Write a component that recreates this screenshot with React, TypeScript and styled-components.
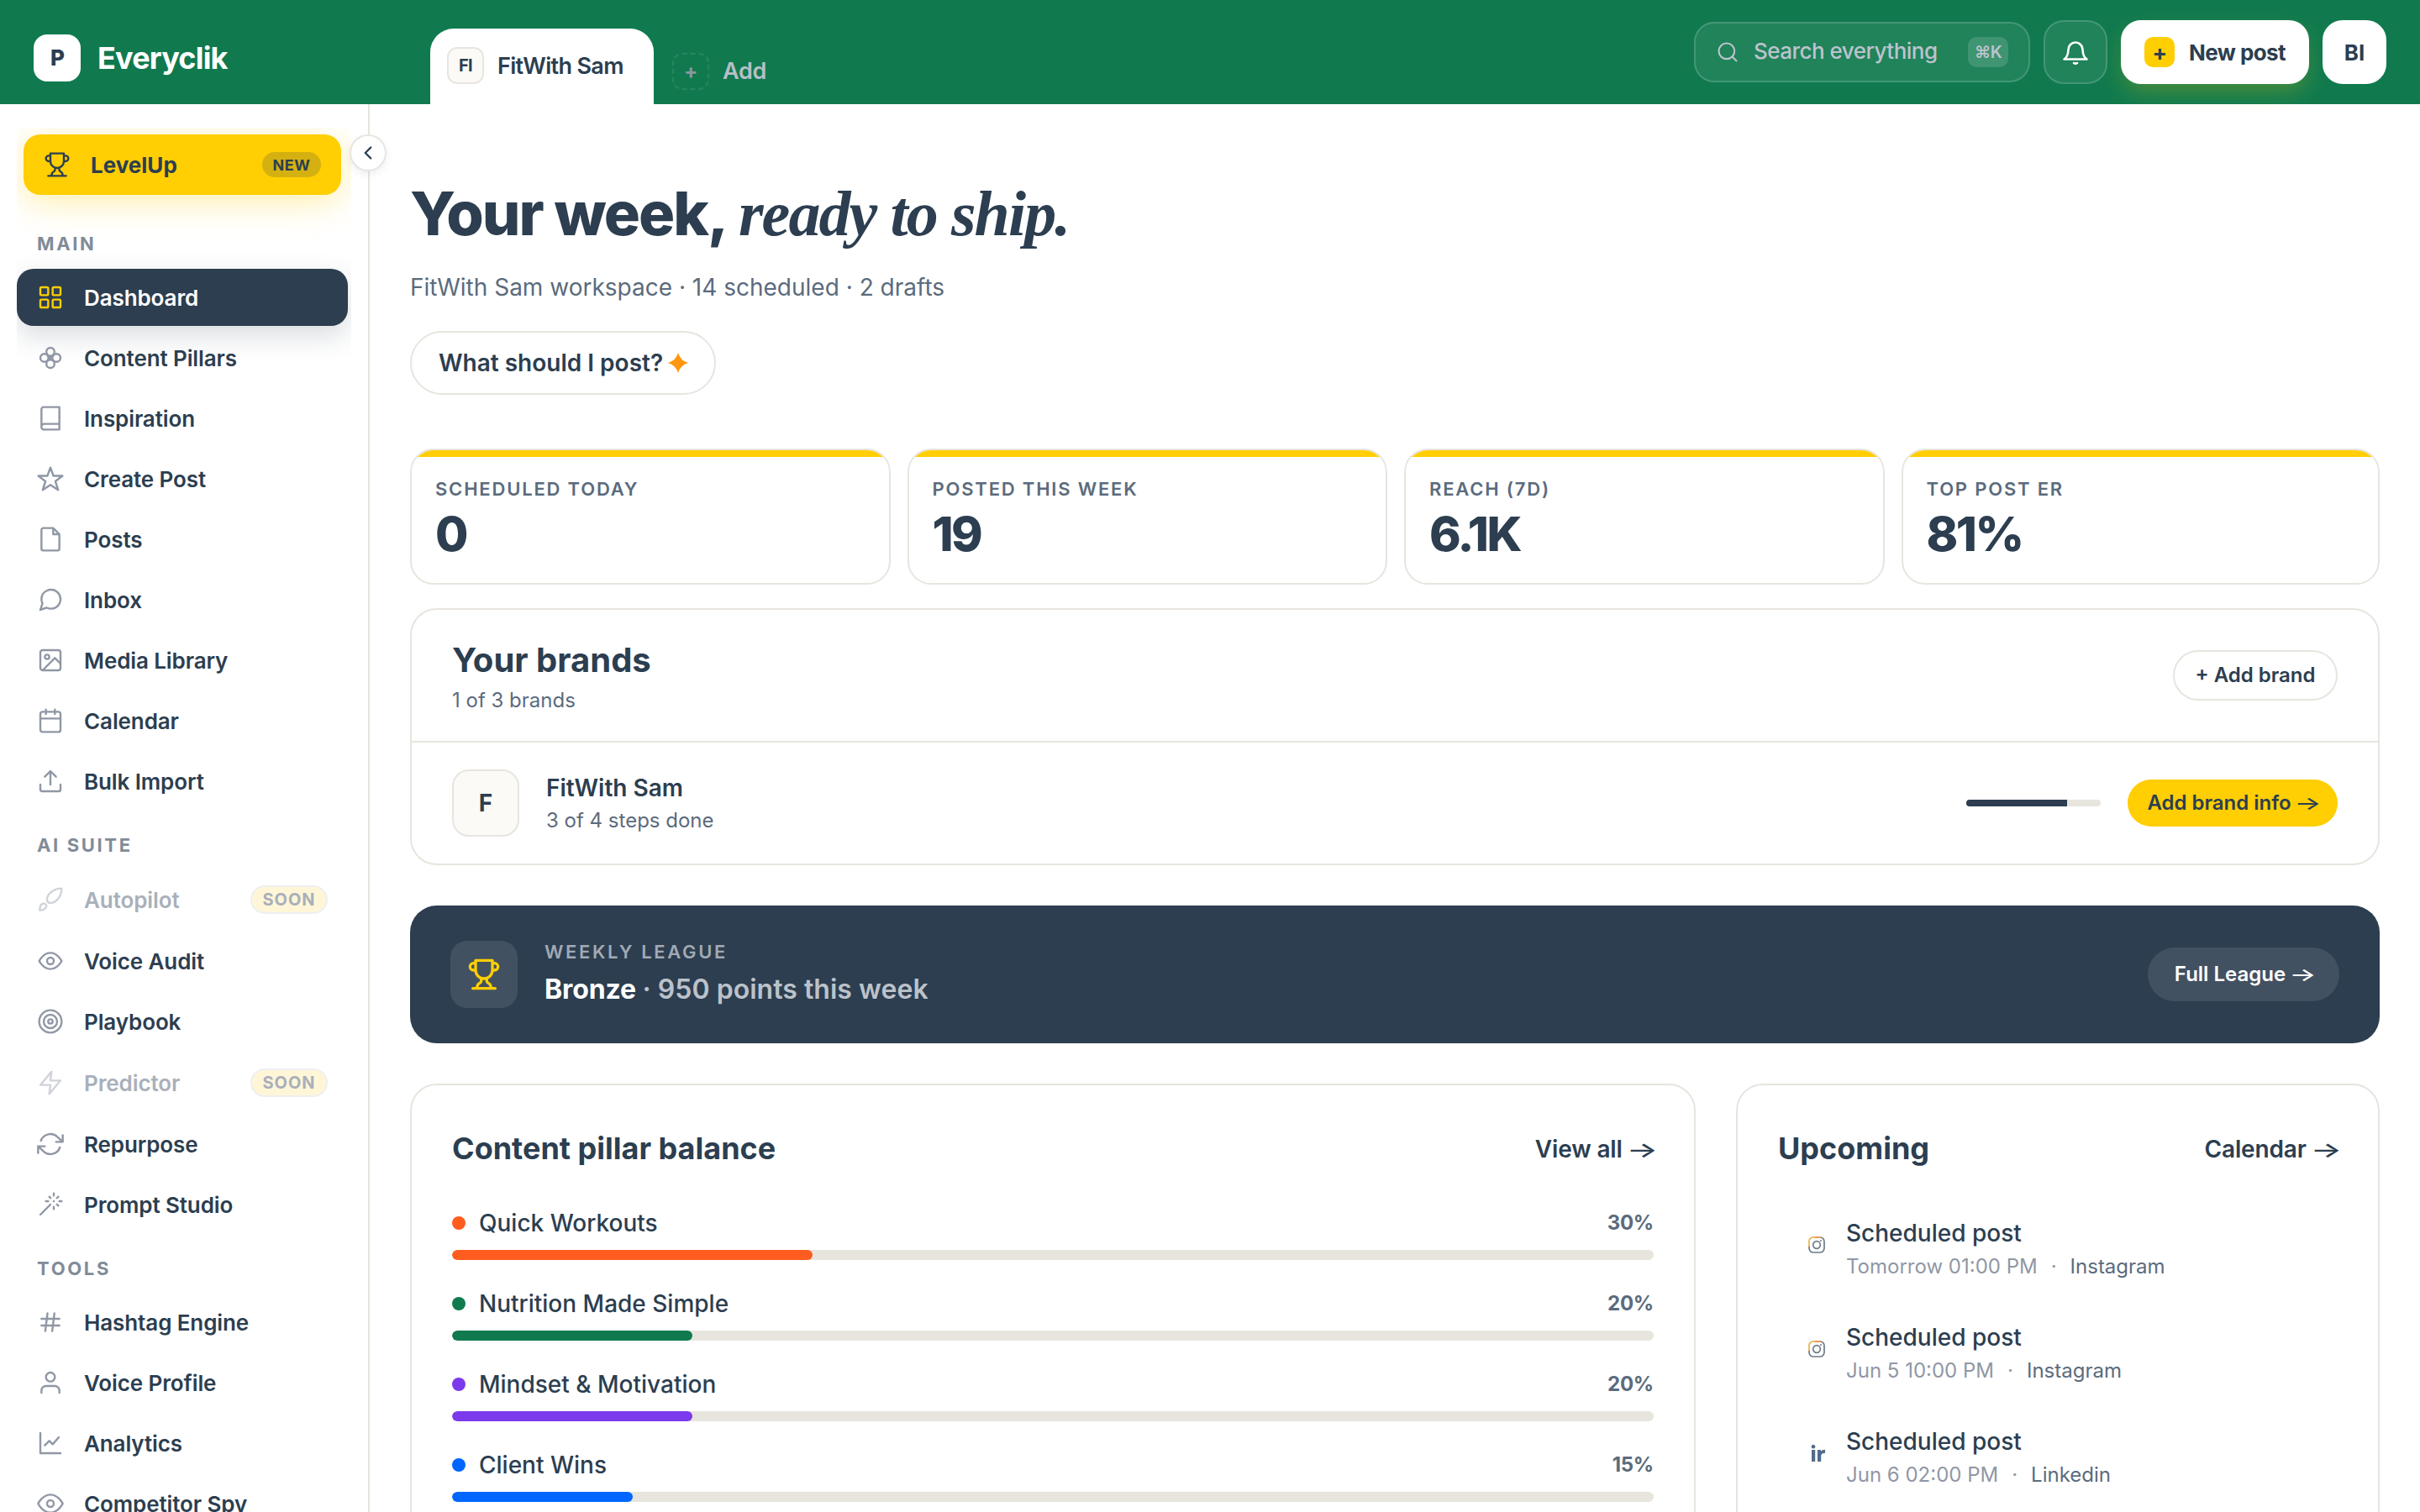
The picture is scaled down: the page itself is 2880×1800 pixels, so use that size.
import React from 'react'
import styled, { createGlobalStyle, css } from 'styled-components'

const navy = '#2c3e50'
const slate = '#5b6b7d'
const muted = '#9097a5'
const line = '#e8e5df'
const yellow = '#ffce03'
const green = '#107a4e'

const GlobalStyle = createGlobalStyle`
  * {
    box-sizing: border-box;
  }

  body {
    margin: 0;
    overflow: hidden;
    background-color: white;
    color: ${navy};
    font-family: Inter, 'Liberation Sans', sans-serif;
  }

  h1,
  h2,
  p {
    margin: 0;
  }

  button {
    font-family: inherit;
    color: inherit;
  }
`

/* ---------- icons ---------- */

const Icon = styled.svg<{ $size?: number; $weight?: number }>`
  display: block;
  flex: none;
  width: ${p => p.$size || 32}px;
  height: ${p => p.$size || 32}px;
  fill: none;
  stroke: currentColor;
  stroke-width: ${p => p.$weight || 1.8};
  stroke-linecap: round;
  stroke-linejoin: round;
`

const icons: { [name: string]: React.ReactNode } = {
  trophy: (
    <path d="M6 9H4.5a2.5 2.5 0 0 1 0-5H6M18 9h1.5a2.5 2.5 0 0 0 0-5H18M4 22h16M10 14.66V17c0 .55-.47.98-.97 1.21C7.85 18.75 7 20.24 7 22M14 14.66V17c0 .55.47.98.97 1.21C16.15 18.75 17 20.24 17 22M18 2H6v7a6 6 0 0 0 12 0V2Z" />
  ),
  grid: (
    <>
      <rect x="3" y="3" width="7" height="7" rx="1" />
      <rect x="14" y="3" width="7" height="7" rx="1" />
      <rect x="3" y="14" width="7" height="7" rx="1" />
      <rect x="14" y="14" width="7" height="7" rx="1" />
    </>
  ),
  pillars: (
    <>
      <circle cx="12" cy="6.6" r="3.6" />
      <circle cx="6.6" cy="12" r="3.6" />
      <circle cx="17.4" cy="12" r="3.6" />
      <circle cx="12" cy="17.4" r="3.6" />
      <path d="M9.6 9.6l4.8 4.8M14.4 9.6l-4.8 4.8" />
    </>
  ),
  book: <path d="M4 19.5A2.5 2.5 0 0 1 6.5 17H20M6 2h14v20H6a2 2 0 0 1-2-2V4a2 2 0 0 1 2-2z" />,
  star: <path d="M12 2l2.7 7.4h8.1l-6.4 4.8 2.5 7.8-6.9-4.6L5.1 22l2.5-7.8-6.4-4.8h8.1z" />,
  file: <path d="M14.5 2H5.5A1.5 1.5 0 0 0 4 3.5v17A1.5 1.5 0 0 0 5.5 22h13a1.5 1.5 0 0 0 1.5-1.5v-13zM14.5 2v5.5H20" />,
  chat: (
    <path d="M21 11.5a8.38 8.38 0 0 1-.9 3.8 8.5 8.5 0 0 1-7.6 4.7 8.38 8.38 0 0 1-3.8-.9L3 21l1.9-5.7a8.38 8.38 0 0 1-.9-3.8 8.5 8.5 0 0 1 4.7-7.6 8.38 8.38 0 0 1 3.8-.9h.5a8.48 8.48 0 0 1 8 8v.5z" />
  ),
  image: (
    <>
      <rect x="3" y="3" width="18" height="18" rx="2" />
      <circle cx="9" cy="9" r="2" />
      <path d="M21 15l-5-5L5 21" />
    </>
  ),
  calendar: (
    <>
      <rect x="3" y="4" width="18" height="18" rx="2" />
      <path d="M16 2v4M8 2v4M3 10h18" />
    </>
  ),
  upload: <path d="M21 15v4.5a1.5 1.5 0 0 1-1.5 1.5h-15A1.5 1.5 0 0 1 3 19.5V15M17 8l-5-5-5 5M12 3v12" />,
  rocket: (
    <>
      <path d="M22 2C15 2 9 7 9 11.8 9 14 10.3 15 12.2 15 17 15 22 9 22 2z" />
      <path d="M2.5 21.5c0-3 1-6 3.6-6 2 0 2.8 1.7 2 3.3-1 2-3 2.7-5.6 2.7z" />
    </>
  ),
  eye: (
    <>
      <path d="M2 12s3.5-7.2 10-7.2S22 12 22 12s-3.5 7.2-10 7.2S2 12 2 12z" />
      <circle cx="12" cy="12" r="3" />
    </>
  ),
  target: (
    <>
      <circle cx="12" cy="12" r="10" />
      <circle cx="12" cy="12" r="6" />
      <circle cx="12" cy="12" r="2" />
    </>
  ),
  zap: <path d="M13 2L3 14h9l-1 8 10-12h-9l1-8z" />,
  refresh: <path d="M23 4v6h-6M1 20v-6h6M3.51 9a9 9 0 0 1 14.85-3.36L23 10M1 14l4.64 4.36A9 9 0 0 0 20.49 15" />,
  wand: <path d="M15 4V2M15 16v-2M8 9h2M20 9h2M17.8 11.8L19 13M15 9h.01M17.8 6.2L19 5M3 21l9-9M12.2 6.2L11 5" />,
  hash: <path d="M4 9h16M4 15h16M9.4 4l-2 16M15.6 4l-2 16" />,
  user: (
    <>
      <path d="M20 21v-2a4 4 0 0 0-4-4H8a4 4 0 0 0-4 4v2" />
      <circle cx="12" cy="7" r="4" />
    </>
  ),
  chart: <path d="M3 3v18h18M7 14l4-4 3 3 5.5-6.2" />,
  spy: (
    <>
      <path d="M1 12s4-8 11-8 11 8 11 8-4 8-11 8-11-8-11-8z" />
      <circle cx="12" cy="12" r="3" />
    </>
  ),
  search: (
    <>
      <circle cx="11" cy="11" r="8" />
      <path d="M21 21l-4.3-4.3" />
    </>
  ),
  chevron: <path d="M15 18l-6-6 6-6" />
}

/* long, thin arrow after link labels */
const Arrow = styled.span`
  display: inline-block;
  margin: 0 0.02em 0 0.11em;
  font-weight: 500;
  letter-spacing: 0;
  transform: translateY(1px) scale(1.4, 0.9);
`

/* ---------- top bar ---------- */

const Bar = styled.header`
  display: flex;
  flex: none;
  height: 124px;
  padding: 0 40px;
  background-color: ${green};
  color: white;
`

const Brand = styled.div`
  display: flex;
  align-items: center;
  width: 472px;
  padding-top: 13px;
  gap: 20px;
  font-size: 36px;
  font-weight: 700;
  line-height: 46px;
  letter-spacing: -0.023em;
`

const BrandMark = styled.div`
  display: flex;
  align-items: center;
  justify-content: center;
  width: 56px;
  height: 56px;
  border-radius: 16px;
  background-color: white;
  color: ${navy};
  font-size: 26px;
  font-weight: 800;
`

const Tabs = styled.div`
  display: flex;
  flex: 1;
  align-items: flex-end;
`

const Tab = styled.div<{ $active?: boolean }>`
  display: flex;
  align-items: center;
  gap: 16px;
  height: ${p => (p.$active ? 90 : 79)}px;
  padding: ${p => (p.$active ? '0 20px 2px' : '0 22px')};
  font-size: 27px;
  font-weight: 600;
  letter-spacing: -0.01em;
  border-radius: 28px 28px 0 0;
  color: #b7bfc7;

  ${p =>
    p.$active &&
    css`
      width: 266px;
      background-color: white;
      color: ${navy};
      letter-spacing: -0.025em;
      white-space: nowrap;
    `}
`

const TabBadge = styled.span<{ $dashed?: boolean }>`
  display: flex;
  flex: none;
  align-items: center;
  justify-content: center;
  width: 44px;
  height: 44px;
  border: 2px solid ${line};
  border-radius: 12px;
  background-color: #fbfaf6;
  font-size: 20px;
  font-weight: 700;

  ${p =>
    p.$dashed &&
    css`
      border: 2px dashed #26865f;
      background: none;
      color: #8b97a0;
      font-size: 24px;
    `}
`

const Actions = styled.div`
  display: flex;
  align-items: center;
  gap: 16px;
`

const SearchField = styled.div`
  display: flex;
  align-items: center;
  width: 400px;
  height: 72px;
  padding: 0 24px 0 24px;
  border: 2px solid rgba(255, 255, 255, 0.16);
  border-radius: 24px;
  background-color: rgba(255, 255, 255, 0.07);
  color: #bcc3cc;
  font-size: 26px;
  font-weight: 500;
  letter-spacing: -0.02em;

  span {
    flex: 1;
    margin-left: 17px;
    padding-bottom: 3px;
    white-space: nowrap;
  }
`

const Kbd = styled.kbd`
  display: flex;
  align-items: center;
  justify-content: center;
  width: 48px;
  height: 36px;
  border-radius: 10px;
  background-color: rgba(255, 255, 255, 0.14);
  font-family: inherit;
  font-size: 20px;
  font-weight: 600;
`

const SquareButton = styled.button<{ $solid?: boolean }>`
  display: flex;
  align-items: center;
  justify-content: center;
  width: 76px;
  height: 76px;
  padding: 0;
  border: 2px solid ${p => (p.$solid ? 'white' : 'rgba(255, 255, 255, 0.16)')};
  border-radius: 24px;
  background-color: ${p => (p.$solid ? 'white' : 'rgba(255, 255, 255, 0.07)')};
  color: ${p => (p.$solid ? navy : 'white')};
  font-size: 26px;
  font-weight: 700;
`

const NewPost = styled.button`
  display: flex;
  align-items: center;
  gap: 17px;
  width: 224px;
  height: 76px;
  padding: 0 0 0 28px;
  border: none;
  border-radius: 24px;
  background-color: white;
  box-shadow: 0 12px 28px -4px rgba(255, 206, 3, 0.26);
  color: ${navy};
  font-size: 26px;
  font-weight: 700;
  letter-spacing: -0.022em;
  white-space: nowrap;
`

const Plus = styled.span`
  display: flex;
  align-items: center;
  justify-content: center;
  width: 36px;
  height: 36px;
  border-radius: 10px;
  background-color: ${yellow};
  font-size: 26px;
`

/* ---------- sidebar ---------- */

const Shell = styled.div`
  display: flex;
  flex-direction: column;
  width: 100vw;
  height: 100vh;
`

const Body = styled.div`
  display: flex;
  flex: 1;
  min-height: 0;
`

const Sidebar = styled.aside`
  position: relative;
  flex: none;
  width: 440px;
  padding: 28px 20px 0;
  border-right: 2px solid ${line};
`

const Collapse = styled.button`
  position: absolute;
  top: 36px;
  right: -22px;
  display: flex;
  align-items: center;
  justify-content: center;
  width: 44px;
  height: 44px;
  padding: 0;
  border: 2px solid ${line};
  border-radius: 50%;
  background-color: white;
  box-shadow: 0 4px 8px rgba(44, 62, 80, 0.08);
`

const Nav = styled.nav`
  height: 100%;
  padding: 8px 4px 0 0;
  overflow: hidden;
`

const LevelUp = styled.a`
  display: flex;
  align-items: center;
  height: 72px;
  margin: 0 8px 16px;
  padding: 0 24px;
  gap: 24px;
  border-radius: 20px;
  background-color: ${yellow};
  box-shadow: 0 8px 40px rgba(255, 206, 3, 0.34);
  font-size: 26px;
  font-weight: 700;
`

const NewBadge = styled.span`
  display: flex;
  align-items: center;
  justify-content: center;
  width: 70px;
  height: 30px;
  margin-left: auto;
  border-radius: 15px;
  background-color: #d5b011;
  font-size: 18px;
  font-weight: 700;
  letter-spacing: 0.03em;
`

const NavHeading = styled.div`
  height: 72px;
  padding: 26px 24px 0;
  color: #818b98;
  font-size: 22px;
  font-weight: 700;
  line-height: 32px;
  letter-spacing: 0.12em;
`

const NavItem = styled.a<{ $active?: boolean; $soon?: boolean }>`
  display: flex;
  align-items: center;
  height: ${p => (p.$soon ? 70 : 68)}px;
  padding: 0 24px;
  gap: 24px;
  border-radius: 20px;
  font-size: 26px;
  font-weight: 600;
  letter-spacing: -0.004em;

  & + & {
    margin-top: 4px;
  }

  svg {
    color: ${muted};
  }

  ${p =>
    p.$soon &&
    css`
      color: #a9b0ba;

      svg {
        color: #d0d3d9;
      }
    `}

  ${p =>
    p.$active &&
    css`
      background-color: ${navy};
      box-shadow: 0 12px 32px rgba(44, 62, 80, 0.18);
      color: white;

      svg {
        color: ${yellow};
      }
    `}
`

const SoonBadge = styled.span`
  display: flex;
  align-items: center;
  justify-content: center;
  width: 92px;
  height: 34px;
  margin-left: auto;
  border: 2px solid #efeff0;
  border-radius: 17px;
  background-color: #fff6d8;
  color: #a9b0ba;
  font-size: 20px;
  font-weight: 700;
  letter-spacing: 0.05em;
`

/* ---------- main column ---------- */

const Main = styled.main`
  flex: 1;
  min-width: 0;
  padding: 84px 48px 0;
  overflow: hidden;
`

const Title = styled.h1`
  height: 92px;
  font-size: 72px;
  font-weight: 800;
  line-height: 92px;
  letter-spacing: -0.028em;
  white-space: nowrap;

  em {
    margin-left: 3px;
    font-family: 'Liberation Serif', serif;
    font-size: 76px;
    font-weight: 700;
    letter-spacing: -0.025em;
  }
`

const Subtitle = styled.p`
  margin-top: 20px;
  color: ${slate};
  font-size: 28px;
  line-height: 44px;
`

const AskButton = styled.button`
  display: flex;
  align-items: center;
  height: 76px;
  margin: 30px 0 64px;
  padding: 0 31px 0 32px;
  gap: 6px;
  border: 2px solid ${line};
  border-radius: 38px;
  background-color: white;
  font-size: 28px;
  font-weight: 600;
`

const Stats = styled.div`
  display: grid;
  grid-template-columns: repeat(3, 571.5px) 1fr;
  gap: 20px;
`

const StatCard = styled.div`
  height: 162px;
  overflow: hidden;
  border: 2px solid ${line};
  border-radius: 28px;

  &::before {
    content: '';
    display: block;
    height: 8px;
    background-color: ${yellow};
  }
`

const StatLabel = styled.div`
  margin: 24px 28px 0;
  color: ${slate};
  font-size: 22px;
  font-weight: 600;
  line-height: 28px;
  letter-spacing: 0.082em;
`

const StatValue = styled.div`
  margin: 5px 28px 0;
  font-size: 57px;
  font-weight: 800;
  line-height: 70px;
  letter-spacing: -0.045em;
`

const Card = styled.section`
  border: 2px solid ${line};
  border-radius: 32px;
  background-color: white;
`

const BrandsCard = styled(Card)`
  height: 306px;
  margin: 28px 0 48px;
`

const BrandsHeader = styled.div`
  display: flex;
  align-items: center;
  justify-content: space-between;
  height: 158px;
  padding: 0 48px;
  border-bottom: 2px solid ${line};
`

const BrandsTitle = styled.h2`
  padding: 2px 0;
  font-size: 40px;
  font-weight: 700;
  line-height: 56px;
`

const Small = styled.p`
  color: ${slate};
  font-size: 24px;
  line-height: 36px;
`

const Pill = styled.button<{ $kind?: 'yellow' | 'ghost' }>`
  width: 196px;
  height: 60px;
  padding: 0 0 1px;
  border: 2px solid ${line};
  border-radius: 32px;
  background-color: white;
  font-size: 24px;
  font-weight: 600;
  white-space: nowrap;

  ${p =>
    p.$kind === 'yellow' &&
    css`
      width: 250px;
      height: 56px;
      border: none;
      background-color: ${yellow};
    `}

  ${p =>
    p.$kind === 'ghost' &&
    css`
      width: 228px;
      height: 64px;
      border: none;
      background-color: #425161;
      color: white;
    `}
`

const BrandRow = styled.div`
  display: flex;
  align-items: center;
  height: 144px;
  padding: 0 48px;
`

const Avatar = styled.div`
  display: flex;
  align-items: center;
  justify-content: center;
  width: 80px;
  height: 80px;
  margin-right: 32px;
  border: 2px solid ${line};
  border-radius: 20px;
  background-color: #fbfaf7;
  font-size: 28px;
  font-weight: 700;
`

const BrandName = styled.div`
  font-size: 28px;
  font-weight: 600;
  line-height: 42px;
`

const Progress = styled.div`
  width: 160px;
  height: 8px;
  margin: 0 32px 0 auto;
  overflow: hidden;
  border-radius: 4px;
  background-color: ${line};

  div {
    height: 100%;
    background-color: ${navy};
  }
`

const League = styled.section`
  display: flex;
  align-items: center;
  height: 164px;
  margin-bottom: 48px;
  padding: 0 48px;
  border-radius: 32px;
  background-color: ${navy};
  color: white;

  button {
    margin-left: auto;
  }
`

const LeagueIcon = styled.div`
  display: flex;
  align-items: center;
  justify-content: center;
  width: 80px;
  height: 80px;
  margin-right: 32px;
  border-radius: 20px;
  background-color: #425161;
  color: ${yellow};
`

const LeagueLabel = styled.div`
  padding-top: 2px;
  color: #a2a9b4;
  font-size: 22px;
  font-weight: 600;
  line-height: 34px;
  letter-spacing: 0.12em;
`

const LeagueText = styled.div`
  font-size: 32px;
  font-weight: 700;
  line-height: 56px;
  letter-spacing: -0.004em;

  span {
    color: #bcc2ca;
    font-weight: 600;
    letter-spacing: 0.001em;
  }
`

const Columns = styled.div`
  display: grid;
  grid-template-columns: 1fr 766px;
  gap: 48px;
  height: 640px;
`

const Panel = styled(Card)`
  padding: 45px 48px 0;
`

const PanelHeader = styled.div`
  display: flex;
  align-items: center;
  justify-content: space-between;
  height: 60px;

  h2 {
    font-size: 36px;
    font-weight: 700;
  }

  a {
    padding-top: 2px;
    font-size: 28px;
    font-weight: 600;
    letter-spacing: -0.005em;
  }
`

const PillarRow = styled.div`
  display: flex;
  align-items: center;
  height: 44px;
  font-size: 28px;
  font-weight: 500;

  span {
    margin-left: auto;
    padding-bottom: 1px;
    color: ${slate};
    font-size: 24px;
    font-weight: 700;
    letter-spacing: -0.01em;
  }
`

const PillarList = styled.div`
  margin-top: 37px;
`

const Dot = styled.i<{ $color: string }>`
  width: 16px;
  height: 16px;
  margin-right: 16px;
  border-radius: 50%;
  background-color: ${p => p.$color};
`

const Track = styled.div<{ $color: string }>`
  height: 12px;
  margin: 10px 0 30px;
  overflow: hidden;
  border-radius: 6px;
  background-color: ${line};

  div {
    height: 100%;
    border-radius: 6px;
    background-color: ${p => p.$color};
  }
`

const PostList = styled.div`
  margin-top: 49px;
`

const Post = styled.div`
  display: flex;
  align-items: center;
  height: 84px;
  margin-bottom: 40px;
  padding-left: 36px;
  gap: 25px;

  svg {
    margin-bottom: 12px;
  }
`

const PostTitle = styled.div`
  font-size: 28px;
  font-weight: 500;
  line-height: 40px;
`

const PostMeta = styled.div`
  display: flex;
  gap: 16px;
  color: ${muted};
  font-size: 24px;
  line-height: 40px;

  b {
    color: ${slate};
    font-weight: 400;
  }
`

const sections = [
  {
    title: 'MAIN',
    items: [
      { icon: 'grid', label: 'Dashboard', active: true },
      { icon: 'pillars', label: 'Content Pillars' },
      { icon: 'book', label: 'Inspiration' },
      { icon: 'star', label: 'Create Post' },
      { icon: 'file', label: 'Posts' },
      { icon: 'chat', label: 'Inbox' },
      { icon: 'image', label: 'Media Library' },
      { icon: 'calendar', label: 'Calendar' },
      { icon: 'upload', label: 'Bulk Import' }
    ]
  },
  {
    title: 'AI SUITE',
    items: [
      { icon: 'rocket', label: 'Autopilot', soon: true },
      { icon: 'eye', label: 'Voice Audit' },
      { icon: 'target', label: 'Playbook' },
      { icon: 'zap', label: 'Predictor', soon: true },
      { icon: 'refresh', label: 'Repurpose' },
      { icon: 'wand', label: 'Prompt Studio' }
    ]
  },
  {
    title: 'TOOLS',
    items: [
      { icon: 'hash', label: 'Hashtag Engine' },
      { icon: 'user', label: 'Voice Profile' },
      { icon: 'chart', label: 'Analytics' },
      { icon: 'spy', label: 'Competitor Spy' }
    ]
  }
] as { title: string; items: { icon: string; label: string; active?: boolean; soon?: boolean }[] }[]

const stats = [
  ['SCHEDULED TODAY', '0'],
  ['POSTED THIS WEEK', '19'],
  ['REACH (7D)', '6.1K'],
  ['TOP POST ER', '81%']
]

const pillars = [
  { name: 'Quick Workouts', value: 30, color: '#ff5c20' },
  { name: 'Nutrition Made Simple', value: 20, color: green },
  { name: 'Mindset & Motivation', value: 20, color: '#7c3aed' },
  { name: 'Client Wins', value: 15, color: '#0066ff' }
]

const posts = [
  { when: 'Tomorrow 01:00 PM', network: 'Instagram' },
  { when: 'Jun 5 10:00 PM', network: 'Instagram' },
  { when: 'Jun 6 02:00 PM', network: 'Linkedin' }
]

const NetworkIcon = ({ network }: { network: string }) =>
  network === 'Instagram' ? (
    <svg width="20" height="20" viewBox="0 0 20 20" fill="none" stroke="#6f7b8b" strokeWidth="1.7">
      <rect x="1" y="1" width="18" height="18" rx="5" />
      <path d="M1 12V6a5 5 0 0 1 5-5h9" stroke="#ffc65c" />
      <path d="M8 1h7M1 11.5v1.5" stroke="#f5793b" strokeWidth="1" />
      <circle cx="10" cy="10" r="4.3" />
      <circle cx="15" cy="5" r="1" fill="#6f7b8b" stroke="none" />
    </svg>
  ) : (
    <svg width="20" height="20" viewBox="0 0 20 20" fill="#566b85">
      <circle cx="6" cy="2.2" r="2.3" />
      <rect x="4" y="6" width="4.2" height="14" />
      <path d="M11 6h4v2c1-1.5 2.5-2.3 5-2.3V10c-3-.5-4.8.6-4.8 3.5V20H11z" />
      <path d="M13.5 9v9" stroke="#1f6fe0" strokeWidth="1.4" />
    </svg>
  )

class Topbar extends React.Component {
  render() {
    return (
      <Bar>
        <Brand>
          <BrandMark>P</BrandMark>
          Everyclik
        </Brand>
        <Tabs>
          <Tab $active>
            <TabBadge>FI</TabBadge>
            FitWith Sam
          </Tab>
          <Tab>
            <TabBadge $dashed>+</TabBadge>
            Add
          </Tab>
        </Tabs>
        <Actions>
          <SearchField>
            <Icon viewBox="0 0 24 24" $size={28}>
              {icons.search}
            </Icon>
            <span>Search everything</span>
            <Kbd>⌘K</Kbd>
          </SearchField>
          <SquareButton>
            <Icon viewBox="-16 -16 32 32" $weight={2.6}>
              <path d="M-13.5 8.5Q-8.8 5.5-8.5-3a8.5 8.5 0 0 1 17 0Q8.8 5.5 13.5 8.5z" />
              <path d="M-2 13q2 1.4 4 0" />
            </Icon>
          </SquareButton>
          <NewPost>
            <Plus>+</Plus>
            New post
          </NewPost>
          <SquareButton $solid>BI</SquareButton>
        </Actions>
      </Bar>
    )
  }
}

class SideNav extends React.Component {
  render() {
    return (
      <Sidebar>
        <Nav>
          <LevelUp>
            <Icon viewBox="0 0 24 24">{icons.trophy}</Icon>
            LevelUp
            <NewBadge>NEW</NewBadge>
          </LevelUp>
          {sections.map(section => (
            <React.Fragment key={section.title}>
              <NavHeading>{section.title}</NavHeading>
              {section.items.map(item => (
                <NavItem key={item.label} $active={item.active} $soon={item.soon}>
                  <Icon viewBox="0 0 24 24">{icons[item.icon]}</Icon>
                  {item.label}
                  {item.soon && <SoonBadge>SOON</SoonBadge>}
                </NavItem>
              ))}
            </React.Fragment>
          ))}
        </Nav>
        <Collapse>
          <Icon viewBox="0 0 24 24" $size={26} $weight={2.2}>
            {icons.chevron}
          </Icon>
        </Collapse>
      </Sidebar>
    )
  }
}

class Brands extends React.Component {
  render() {
    return (
      <BrandsCard>
        <BrandsHeader>
          <div>
            <BrandsTitle>Your brands</BrandsTitle>
            <Small>1 of 3 brands</Small>
          </div>
          <Pill>+ Add brand</Pill>
        </BrandsHeader>
        <BrandRow>
          <Avatar>F</Avatar>
          <div>
            <BrandName>FitWith Sam</BrandName>
            <Small>3 of 4 steps done</Small>
          </div>
          <Progress>
            <div style={{ width: `${(3 / 4) * 100}%` }} />
          </Progress>
          <Pill $kind="yellow">
            Add brand info <Arrow>→</Arrow>
          </Pill>
        </BrandRow>
      </BrandsCard>
    )
  }
}

class Pillars extends React.Component {
  render() {
    return (
      <Panel>
        <PanelHeader>
          <h2>Content pillar balance</h2>
          <a>
            View all <Arrow>→</Arrow>
          </a>
        </PanelHeader>
        <PillarList>
          {pillars.map(pillar => (
            <div key={pillar.name}>
              <PillarRow>
                <Dot $color={pillar.color} />
                {pillar.name}
                <span>{pillar.value}%</span>
              </PillarRow>
              <Track $color={pillar.color}>
                <div style={{ width: `${pillar.value}%` }} />
              </Track>
            </div>
          ))}
        </PillarList>
      </Panel>
    )
  }
}

class Upcoming extends React.Component {
  render() {
    return (
      <Panel>
        <PanelHeader>
          <h2>Upcoming</h2>
          <a>
            Calendar <Arrow>→</Arrow>
          </a>
        </PanelHeader>
        <PostList>
          {posts.map(post => (
            <Post key={post.when}>
              <NetworkIcon network={post.network} />
              <div>
                <PostTitle>Scheduled post</PostTitle>
                <PostMeta>
                  <span>{post.when}</span>
                  <span>·</span>
                  <b>{post.network}</b>
                </PostMeta>
              </div>
            </Post>
          ))}
        </PostList>
      </Panel>
    )
  }
}

export default class App extends React.Component {
  render() {
    return (
      <Shell>
        <GlobalStyle />
        <Topbar />
        <Body>
          <SideNav />
          <Main>
            <Title>
              Your week, <em>ready to ship.</em>
            </Title>
            <Subtitle>FitWith Sam workspace · 14 scheduled · 2 drafts</Subtitle>
            <AskButton>
              What should I post?
              <svg width="24" height="24" viewBox="0 0 22 22" fill="#ff9711">
                <path d="M11 0Q13.5 8.5 22 11 13.5 13.5 11 22 8.5 13.5 0 11 8.5 8.5 11 0z" />
              </svg>
            </AskButton>
            <Stats>
              {stats.map(([label, value]) => (
                <StatCard key={label}>
                  <StatLabel>{label}</StatLabel>
                  <StatValue>{value}</StatValue>
                </StatCard>
              ))}
            </Stats>
            <Brands />
            <League>
              <LeagueIcon>
                <Icon viewBox="0 0 24 24" $size={40} $weight={2}>
                  {icons.trophy}
                </Icon>
              </LeagueIcon>
              <div>
                <LeagueLabel>WEEKLY LEAGUE</LeagueLabel>
                <LeagueText>
                  Bronze <span>· 950 points this week</span>
                </LeagueText>
              </div>
              <Pill $kind="ghost">
                Full League <Arrow>→</Arrow>
              </Pill>
            </League>
            <Columns>
              <Pillars />
              <Upcoming />
            </Columns>
          </Main>
        </Body>
      </Shell>
    )
  }
}
